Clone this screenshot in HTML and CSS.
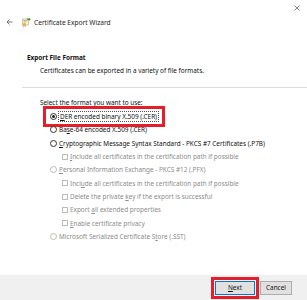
FILE: index.html
```html
<!DOCTYPE html>
<html>
<head>
<meta charset="utf-8">
<link rel="stylesheet" href="styles.css">
</head>
<body>
<div class="window">
  <div class="topbar">
    <svg class="close" width="6" height="6" viewBox="0 0 6 6"><path d="M0.5 0.5L5.5 5.5M5.5 0.5L0.5 5.5" stroke="#666" stroke-width="0.8"/></svg>
  </div>
  <div class="nav">
    <svg class="back" width="7" height="6" viewBox="0 0 7 6"><path d="M6.5 3H1M3.5 0.5L1 3L3.5 5.5" fill="none" stroke="#555" stroke-width="0.8"/></svg>
    <svg class="icon" width="9" height="10" viewBox="0 0 9 10">
      <rect x="0.5" y="2" width="6" height="6" fill="#f4f0dc" stroke="#b9a86a" stroke-width="0.6"/>
      <path d="M1.5 3.5h4M1.5 4.7h3" stroke="#9a8a5a" stroke-width="0.5"/>
      <circle cx="2.5" cy="7.2" r="1.4" fill="#e8b820"/>
      <path d="M2 8.2l-0.6 1.6M3 8.2l0.6 1.6" stroke="#d04030" stroke-width="0.6"/>
      <path d="M5 1.5h2.2V0.5L8.8 2.2L7.2 3.9V2.9H5z" fill="#3aa23a"/>
    </svg>
    <span class="title">Certificate Export Wizard</span>
  </div>
  <div class="header">
    <div class="h-title">Export File Format</div>
    <div class="h-desc">Certificates can be exported in a variety of file formats.</div>
  </div>
  <div class="sep"></div>
  <div class="main">
    <div class="prompt">Select the format you want to use:</div>
    <div class="options">
      <div class="row">
        <span class="sel">
          <span class="radio checked"></span>
          <span class="lbl focus"><u>D</u>ER encoded binary X.509 (.CER)</span>
        </span>
      </div>
      <div class="row"><span class="radio"></span><span class="lbl">Ba<u>s</u>e-64 encoded X.509 (.CER)</span></div>
      <div class="row"><span class="radio"></span><span class="lbl"><u>C</u>ryptographic Message Syntax Standard - PKCS #7 Certificates (.P7B)</span></div>
      <div class="row sub dis"><span class="check"></span><span class="lbl"><u>I</u>nclude all certificates in the certification path if possible</span></div>
      <div class="row dis"><span class="radio"></span><span class="lbl"><u>P</u>ersonal Information Exchange - PKCS #12 (.PFX)</span></div>
      <div class="row sub dis"><span class="check"></span><span class="lbl">Incl<u>u</u>de all certificates in the certification path if possible</span></div>
      <div class="row sub dis"><span class="check"></span><span class="lbl">Delete the private <u>k</u>ey if the export is successful</span></div>
      <div class="row sub dis"><span class="check"></span><span class="lbl">Export <u>a</u>ll extended properties</span></div>
      <div class="row sub dis"><span class="check"></span><span class="lbl"><u>E</u>nable certificate privacy</span></div>
      <div class="row dis"><span class="radio"></span><span class="lbl">Microsoft Serialized Certificate S<u>t</u>ore (.SST)</span></div>
    </div>
  </div>
  <div class="footer">
    <button class="btn default"><u>N</u>ext</button>
    <button class="btn">Cancel</button>
  </div>
</div>
</body>
</html>
```

FILE: styles.css
```css
* { box-sizing: border-box; }
html, body {
  margin: 0;
  padding: 0;
  background: #fff;
}
.window {
  width: 307px;
  height: 300px;
  display: flex;
  flex-direction: column;
  font-family: "Noto Sans", "Open Sans", sans-serif;
  font-size: 6.4px;
  color: #111;
  background: #fff;
}
.topbar {
  height: 15px;
  display: flex;
  justify-content: flex-end;
  align-items: flex-start;
  padding: 5px 7px 0 0;
}
.close { display: block; }
.nav {
  height: 14px;
  display: flex;
  align-items: center;
  padding-left: 6px;
}
.back { margin-right: 9px; }
.icon { margin-right: 3px; }
.title {
  font-size: 6.6px;
  color: #222;
}
.header {
  padding: 24px 0 0 27px;
  height: 58px;
}
.h-title {
  font-weight: bold;
  line-height: 9px;
}
.h-desc {
  padding-left: 13px;
  margin-top: 4px;
  line-height: 9px;
}
.sep {
  height: 1px;
  background: #dcdcdc;
  margin-left: 22px;
}
.main {
  flex: 1;
  padding: 10px 0 0 40px;
}
.prompt {
  line-height: 9px;
  height: 11px;
}
.options {
  padding-left: 10px;
  padding-top: 1px;
}
.row {
  height: 13.33px;
  display: flex;
  align-items: center;
  white-space: nowrap;
}
.sel {
  display: inline-flex;
  align-items: center;
  height: 15px;
  padding: 0 4px;
  margin: 0 -4px;
  outline: 3px solid #e61e28;
}
.row.sub { padding-left: 12px; }
.row.dis { color: #8c8c8c; }
.radio {
  width: 7px;
  height: 7px;
  border: 0.7px solid #333;
  border-radius: 50%;
  margin-right: 2px;
  flex: none;
  display: flex;
  align-items: center;
  justify-content: center;
  background: #fff;
}
.row.dis .radio { border-color: #bcbcbc; }
.radio.checked::after {
  content: "";
  width: 3.5px;
  height: 3.5px;
  border-radius: 50%;
  background: #222;
}
.check {
  width: 6px;
  height: 6px;
  border: 0.7px solid #bcbcbc;
  margin-right: 2px;
  flex: none;
}
.lbl u { text-decoration-thickness: 0.5px; text-underline-offset: 1px; }
.focus {
  outline: 0.7px dotted #555;
  padding: 0 1px;
}
.footer {
  height: 25px;
  background: #f0f0f0;
  display: flex;
  justify-content: flex-end;
  align-items: center;
  padding-right: 15px;
  gap: 5px;
}
.btn {
  font-family: "Noto Sans", "Open Sans", sans-serif;
  font-size: 6.4px;
  color: #111;
  height: 14px;
  width: 32px;
  padding: 0;
  background: #e1e1e1;
  border: 0.7px solid #adadad;
  border-radius: 0;
}
.btn.default {
  width: 40px;
  border: 1px solid #0078d7;
  outline: 3px solid #e61e28;
  outline-offset: 1px;
}
```
